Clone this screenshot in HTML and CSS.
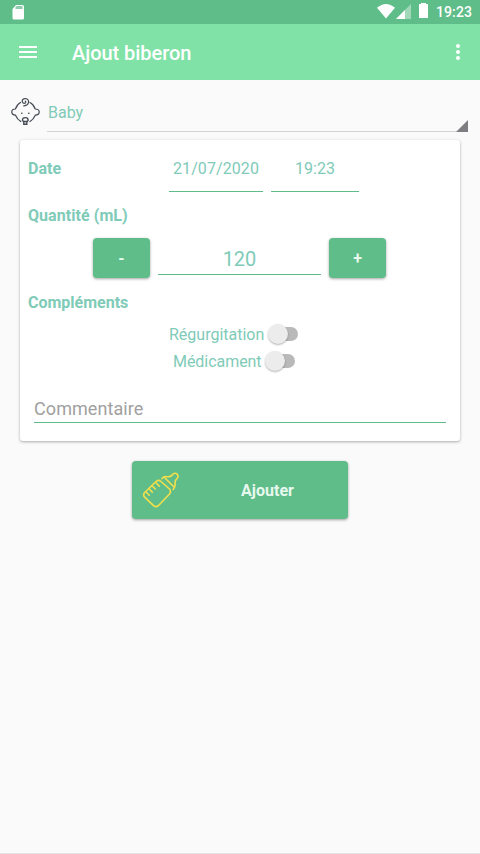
FILE: index.html
```html
<!DOCTYPE html>
<html lang="fr">
<head>
<meta charset="utf-8">
<title>Ajout biberon</title>
<link rel="stylesheet" href="styles.css">
</head>
<body>
<div class="status">
  <svg class="sd" width="14" height="18" viewBox="0 0 14 18"><path d="M5 1h6.500q1.500 0 1.500 1.500v11.500q0 1.500-1.500 1.500h-8.500q-1.500 0-1.500-1.500V5z" fill="#fff"/><path d="M5.500 2h6v3h-7V3z" fill="#8fceac"/></svg>
  <svg class="signals" width="54" height="20" viewBox="0 0 54 20">
    <path d="M0 5.800Q9 -1.800 18 5.800L9 16.500z" fill="#fff"/>
    <path d="M34 2v15H19z" fill="#a0d8b8"/><path d="M28 8v9h-9z" fill="#fff"/>
    <path d="M42 2h2V1h5v1h2v14h-9z" fill="#fff"/>
  </svg>
  <span class="clock">19:23</span>
</div>
<header class="appbar">
  <svg class="menu" width="18" height="12" viewBox="0 0 18 12"><path d="M0 1h18M0 6h18M0 11h18" stroke="#fff" stroke-width="2"/></svg>
  <h1 class="title">Ajout biberon</h1>
  <svg class="more" width="4" height="16" viewBox="0 0 4 16" fill="#fff"><circle cx="2" cy="2" r="2"/><circle cx="2" cy="8" r="2"/><circle cx="2" cy="14" r="2"/></svg>
</header>
<main>
  <div class="child">
    <svg class="face" width="30" height="30" viewBox="0 0 30 30" fill="none" stroke="#454a53" stroke-width="1.200" stroke-linecap="round">
      <path d="M9.500 5.500Q5.800 7.500 4.400 12Q.8 12 .8 15T4.500 18.200Q6.400 22.500 9.800 24.600M19 5.500Q22.800 7.500 24.300 12Q28.200 12 28.200 15T24.300 18.200Q22.400 22.500 19 24.600"/>
      <path d="M12.800 8.800Q17.500 8.200 17.600 4.700Q17.200 1.500 14.200 1.500Q11.200 1.800 11.200 4.300Q11.800 6.800 14 6.200Q15.400 5.400 14.300 4.100"/>
      <path d="M11.500 23.500Q11.300 20.600 14.300 20.600Q17.300 20.600 17.100 23.500L16 24.500H12.600z" stroke-width="1.400"/><path d="M12.800 24.800v2.500h3v-2.500" stroke-width="1.400"/>
      <path d="M10.800 16.300h.1M17.800 16.300h.1" stroke-width="1.600"/>
    </svg>
    <div class="spinner">Baby<svg class="corner" width="12" height="12" viewBox="0 0 12 12"><path d="M12 0v12H0z" fill="#7d7d82"/></svg></div>
  </div>
  <section class="card">
    <div class="dates"><strong>Date</strong><span class="field day">21/07/2020</span><span class="field hour">19:23</span></div>
    <h2 class="label quantity">Quantité (mL)</h2>
    <div class="stepper"><button class="btn step">-</button><span class="amount">120</span><button class="btn step">+</button></div>
    <h2 class="label extras">Compléments</h2>
    <div class="option"><span>Régurgitation</span><i class="switch"></i></div>
    <div class="option second"><span>Médicament</span><i class="switch"></i></div>
    <div class="comment">Commentaire</div>
  </section>
  <button class="btn add">
    <svg class="bottle" width="38" height="38" viewBox="0 0 38 38" fill="none" stroke="#f4df4b" stroke-width="1.600" stroke-linecap="round" stroke-linejoin="round">
      <path d="M13.500 11L15 9.800Q17 8.600 19 10.500L27.500 18Q29.500 20.500 27.500 23L16.300 34.700Q14 36.700 11.500 34.700L2.700 26.200Q.5 24 2.700 21.500z"/>
      <path d="M4 21l3.300 3.300M7 17.800l3.300 3.300M10 14.700l3.300 3.300M13.500 11.300l3.800 3.800"/>
      <path d="M20 7.600Q22 5 24.800 5.700Q29 6.200 30.500 3.500Q33 1.200 35.200 3.200Q37 5.300 35 7.600Q32.500 9.500 33.200 12.500Q33.600 15.500 31.200 18.500M23 7L31.800 15.800"/>
    </svg>
    <span class="add-text">Ajouter</span>
  </button>
</main>
<div class="bottom"></div>
</body>
</html>
```
FILE: styles.css
```css
* { box-sizing: border-box; }
body {
  margin: 0;
  height: 854px;
  display: flex;
  flex-direction: column;
  overflow: hidden;
  background: #fafafa;
  color: #80cbb8;
  font: 16px/20px Roboto, sans-serif;
}
svg { display: block; flex: none; }
.status {
  height: 24px;
  display: flex;
  align-items: flex-start;
  padding: 2px 8px 0 11px;
  background: #5ebd88;
  color: #fff;
}
.sd { margin-top: 2px; }
.signals { margin-left: auto; }
.clock { width: 36px; margin-left: 5px; font-size: 14px; font-weight: 500; letter-spacing: .1px; white-space: nowrap; }
.appbar {
  height: 56px;
  display: flex;
  align-items: center;
  padding: 0 20px 0 19px;
  background: #80e2a7;
  color: #fff;
}
.title { margin: 2px 0 0 35px; font-size: 20px; font-weight: 500; line-height: 24px; letter-spacing: -.05px; }
.more { margin-left: auto; }
main { flex: 1; padding: 0 20px; }
.child { height: 60px; display: flex; margin: 0 -8px 0 -10px; padding-top: 17px; }
.face { margin-left: 1px; }
.spinner {
  position: relative;
  flex: 1;
  height: 35px;
  margin-left: 6px;
  padding: 6px 1px;
  border-bottom: 1px solid #d3d3d3;
}
.corner { position: absolute; right: 0; bottom: -1px; }
.card {
  height: 301px;
  padding: 16px 8px 0;
  border-radius: 3px;
  background: #fff;
  box-shadow: 0 1px 3px rgba(0, 0, 0, .32);
}
.dates { display: flex; height: 36px; line-height: 25px; }
.dates strong { width: 141px; }
.field { height: 36px; border-bottom: 1px solid #5ebd88; text-align: center; }
.day { width: 94px; letter-spacing: .08px; }
.hour { width: 88px; margin-left: 8px; }
.label { margin: 0; font-size: 16px; font-weight: 700; line-height: 20px; }
.quantity { margin-top: 14px; letter-spacing: .06px; }
.stepper { display: flex; gap: 8px; margin: 12px 0 0 65px; }
.btn {
  border: 0;
  border-radius: 4px;
  background: #5ebd88;
  color: #e7f8ee;
  box-shadow: 0 1px 3px rgba(0, 0, 0, .36);
  font: 700 16px/20px Roboto, sans-serif;
}
.step { width: 57px; height: 40px; padding: 2px 0 0; }
.amount { width: 163px; height: 37px; padding-top: 9px; border-bottom: 1px solid #5ebd88; font-size: 20px; line-height: 24px; text-align: center; }
.extras { margin-top: 15px; }
.option { display: flex; height: 27px; align-items: center; margin: 8px 0 0 141px; }
.option.second { margin: 0 0 0 145px; letter-spacing: -.05px; }
.switch { position: relative; width: 30px; height: 14px; margin: -1px 0 0 3.5px; border-radius: 7px; background: linear-gradient(to right, transparent 10px, #b9b9b9 10px); }
.second .switch { margin-left: 3px; }
.switch::before { content: ""; position: absolute; left: 0; top: -3px; width: 20px; height: 20px; border-radius: 50%; background: #ececec; box-shadow: 0 1px 2px rgba(0, 0, 0, .3); }
.comment { height: 35px; margin: 13px 6px 0; padding-top: 9px; border-bottom: 1px solid #5ebd88; color: #a0a0a0; font-size: 18px; line-height: 24px; letter-spacing: .08px; }
.add { display: flex; align-items: center; width: 216px; height: 58px; margin: 20px auto 0; padding: 0 0 0 10px; }
.add-text { flex: 1; margin: 1px 0 0 7px; text-align: center; }
.bottom { height: 1px; background: #e5e5e5; }
```
